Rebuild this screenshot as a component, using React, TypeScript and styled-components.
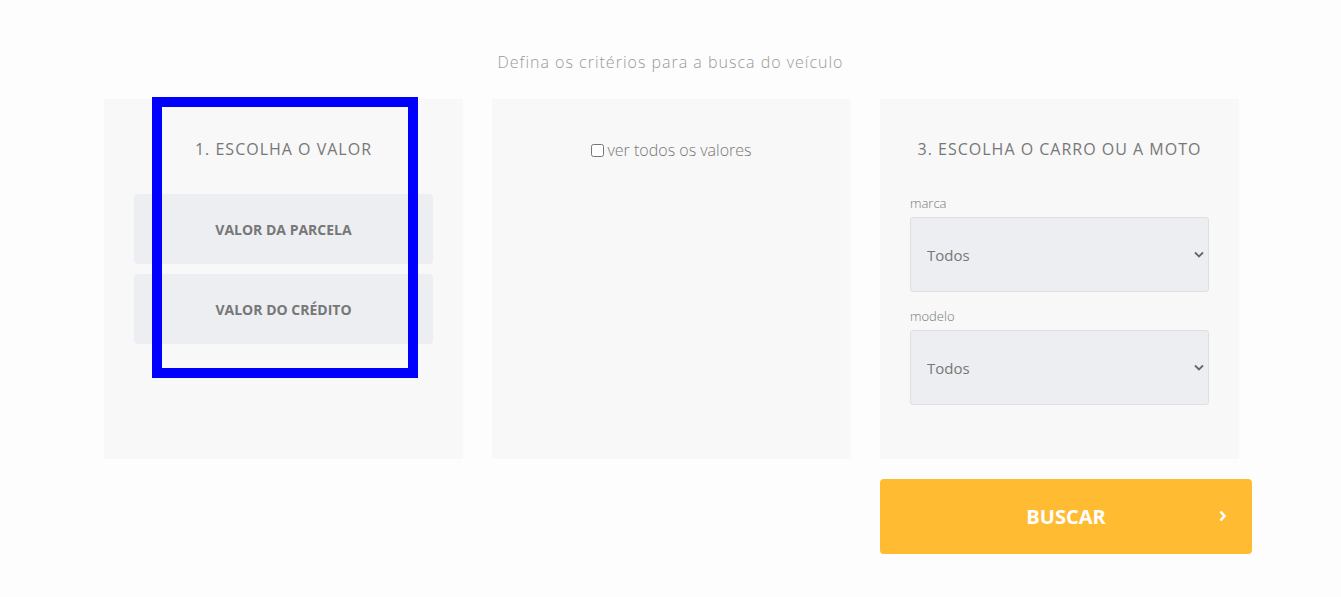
import React from 'react'
import styled, { createGlobalStyle } from 'styled-components'

const GlobalStyle = createGlobalStyle`
  html, body {
    margin: 0;
    padding: 0;
    background: #fdfdfd;
    font-family: 'Open Sans', 'Liberation Sans', sans-serif;
  }
  * {
    box-sizing: border-box;
  }
`

const Page = styled.main`
  position: relative;
  width: 1341px;
  height: 597px;
  padding-top: 51px;
`

const Heading = styled.h2`
  margin: 0 0 26px;
  text-align: center;
  font-weight: 300;
  font-size: 16px;
  line-height: 22px;
  letter-spacing: 1px;
  color: #999;
`

const Grid = styled.div`
  display: grid;
  grid-template-columns: repeat(3, 359px);
  column-gap: 29px;
  row-gap: 20px;
  margin-left: 104px;
`

const Panel = styled.section`
  display: flex;
  flex-direction: column;
  align-items: stretch;
  height: 360px;
  background: #f8f8f8;
  padding: 39px 30px 0;
`

const PanelTitle = styled.h3`
  margin: 0 0 34px;
  text-align: center;
  font-weight: 400;
  font-size: 16px;
  line-height: 22px;
  letter-spacing: 1px;
  color: #777;
`

const ChoiceList = styled.div`
  display: flex;
  flex-direction: column;
  gap: 10px;
`

const Choice = styled.button`
  height: 70px;
  border: none;
  border-radius: 4px;
  background: #eceef1;
  font-family: inherit;
  font-weight: 700;
  font-size: 14px;
  color: #777;
  cursor: pointer;
`

const CheckRow = styled.label`
  display: flex;
  justify-content: center;
  align-items: center;
  gap: 3px;
  margin-top: 1px;
  font-weight: 300;
  font-size: 16px;
  line-height: 22px;
  color: #777;
`

const Check = styled.input`
  margin: 0;
  width: 13px;
  height: 13px;
`

const Field = styled.div`
  display: flex;
  flex-direction: column;
  margin-bottom: 15px;
`

const FieldLabel = styled.label`
  font-weight: 300;
  font-size: 13px;
  line-height: 18px;
  color: #777;
  margin-bottom: 5px;
`

const SelectWrap = styled.div`
  position: relative;
`

const Select = styled.select`
  appearance: none;
  width: 100%;
  height: 75px;
  padding: 0 16px;
  border: 1px solid #dedfe1;
  border-radius: 3px;
  background: #eceef1;
  font-family: inherit;
  font-size: 15px;
  color: #777;
  outline: none;
`

const Chevron = styled.svg`
  position: absolute;
  right: 5px;
  top: 34px;
  pointer-events: none;
`

const SearchCell = styled.div`
  grid-column: 3;
`

const SearchButton = styled.button`
  position: relative;
  display: flex;
  justify-content: center;
  align-items: center;
  width: 372px;
  height: 75px;
  border: none;
  border-radius: 4px;
  background: #ffbc33;
  color: #fff;
  font-family: inherit;
  font-weight: 700;
  font-size: 20px;
  cursor: pointer;
`

const ButtonArrow = styled.svg`
  position: absolute;
  right: 25px;
  top: 31px;
`

const Highlight = styled.div`
  position: absolute;
  left: 152px;
  top: 97px;
  width: 266px;
  height: 281px;
  border: 10px solid #0000ff;
  pointer-events: none;
`

const SelectField = ({ label }: { label: string }) => (
  <Field>
    <FieldLabel>{label}</FieldLabel>
    <SelectWrap>
      <Select defaultValue="todos">
        <option value="todos">Todos</option>
      </Select>
      <Chevron width="10" height="7" viewBox="0 0 10 7">
        <path d="M1 1.5l4 4 4-4" fill="none" stroke="#666" strokeWidth="1.8" />
      </Chevron>
    </SelectWrap>
  </Field>
)

export default function App() {
  return (
    <Page>
      <GlobalStyle />
      <Heading>Defina os critérios para a busca do veículo</Heading>

      <Grid>
        <Panel>
          <PanelTitle>1. ESCOLHA O VALOR</PanelTitle>
          <ChoiceList>
            <Choice>VALOR DA PARCELA</Choice>
            <Choice>VALOR DO CRÉDITO</Choice>
          </ChoiceList>
        </Panel>

        <Panel>
          <CheckRow>
            <Check type="checkbox" />
            ver todos os valores
          </CheckRow>
        </Panel>

        <Panel>
          <PanelTitle>3. ESCOLHA O CARRO OU A MOTO</PanelTitle>
          <SelectField label="marca" />
          <SelectField label="modelo" />
        </Panel>

        <SearchCell>
          <SearchButton>
            BUSCAR
            <ButtonArrow width="9" height="12" viewBox="0 0 9 12">
              <path d="M2.5 1.5l4 4.5-4 4.5" fill="none" stroke="#fff" strokeWidth="2.6" />
            </ButtonArrow>
          </SearchButton>
        </SearchCell>
      </Grid>

      <Highlight />
    </Page>
  )
}
